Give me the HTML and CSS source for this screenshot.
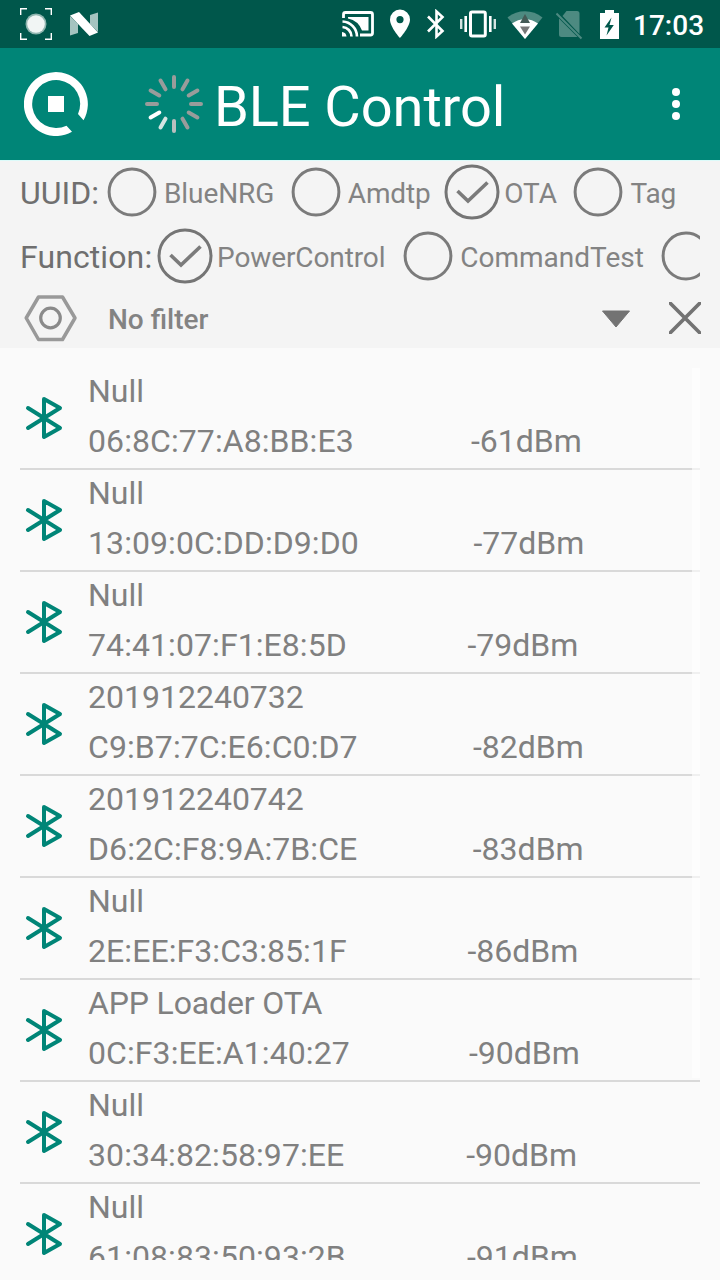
FILE: index.html
```html
<!DOCTYPE html>
<html lang="en">
<head>
<meta charset="utf-8">
<title>BLE Control</title>
<link rel="stylesheet" href="styles.css">
</head>
<body>
<svg class="defs" width="0" height="0">
  <symbol id="radio-off" viewBox="0 0 64 64"><circle cx="32" cy="32" r="22.900" fill="none" stroke="#7b7b7b" stroke-width="3"/></symbol>
  <symbol id="radio-on" viewBox="0 0 64 64"><circle cx="32" cy="32" r="26" fill="none" stroke="#757575" stroke-width="3"/><path d="M17.500 31 28 41 47.500 22.500" fill="none" stroke="#7b7b7b" stroke-width="3.600"/></symbol>
  <symbol id="bt" viewBox="0 0 48 48"><path d="M8 14 40 34 24 43V5L40 14 8 34" fill="none" stroke="#008577" stroke-width="4" stroke-linecap="round" stroke-linejoin="round"/></symbol>
</svg>
<div class="screen">
  <header class="status">
    <svg class="i-rec" width="32" height="32" viewBox="20 8 32 32"><path d="M20.700 15V8.700H27M45 8.700h6.300V15M51.300 33v6.300H45M27 39.300h-6.300V33" fill="none" stroke="#fff" stroke-width="1.400"/><circle cx="36" cy="24" r="10.500" fill="#8fb5af"/><circle cx="36" cy="24" r="8.800" fill="#f1f5f4"/></svg>
    <svg class="i-n" width="28" height="24" viewBox="70 12 28 24"><path d="M70 16l8 8v9l-8 2.500zM98 12.500v19.500l-8-8v-9z" fill="#a5c4c0"/><path d="M70 15.500 79 12 98 32.500 89.500 36z" fill="#fff"/></svg>
    <span class="spacer"></span>
    <svg class="i-cast" width="32" height="28" viewBox="342 10 32 28"><path d="M343.500 18v-3.500a2 2 0 0 1 2-2h25a2 2 0 0 1 2 2V33a2 2 0 0 1-2 2H360" fill="none" stroke="#fff" stroke-width="2.800"/><path d="M348 17h20.500v13.500H362A19 19 0 0 0 348 18.500z" fill="#fff"/><path d="M342.500 21.500A15 15 0 0 1 357 36.500M342.500 27A9.500 9.500 0 0 1 351.500 36.500" fill="none" stroke="#fff" stroke-width="2.700"/><path d="M342 32a5 5 0 0 1 4.500 4.500H342z" fill="#fff"/></svg>
    <svg class="i-pin" width="20" height="30" viewBox="390 9 20 30"><path fill-rule="evenodd" d="M400 9.500a10 10 0 0 0-10 10C390 27 400 38 400 38s10-11 10-18.500a10 10 0 0 0-10-10zm0 6.500a3.600 3.600 0 1 1 0 7.200 3.600 3.600 0 0 1 0-7.200z" fill="#fff"/></svg>
    <svg class="i-bt" width="18" height="30" viewBox="427 9 18 30"><path d="M428 16.500 442.500 31 436.500 36.500V11.500L442.500 17 428 31.500" fill="none" stroke="#fff" stroke-width="2.600"/></svg>
    <svg class="i-vib" width="36" height="28" viewBox="460 10 36 28"><rect x="470.500" y="12" width="14.800" height="24" rx="1.500" fill="none" stroke="#fff" stroke-width="3"/><path d="M461.200 19v10M494.800 19v10" stroke="#d5e3e1" stroke-width="2.400"/><path d="M465.700 16v16M490.300 16v16" stroke="#fff" stroke-width="2.600"/></svg>
    <svg class="i-wifi" width="36" height="29" viewBox="507 9 36 29"><path d="M507.500 16.500a28 28 0 0 1 35 0L525 38z" fill="#4d8a81"/><path d="M512 22.500a22 22 0 0 1 26 0L525 38z" fill="#fff"/><path d="M525 13l5 9h-10z" fill="#455a56"/><path d="M520 25.500h10l-5 8z" fill="#777"/></svg>
    <svg class="i-sim" width="27" height="30" viewBox="556 10 27 30"><path d="M566.500 11H577a2.500 2.500 0 0 1 2.500 2.500V34L562.500 16zM559 18.500 577.500 37H561.500a2.500 2.500 0 0 1-2.500-2.500z" fill="#4d8a81"/><path d="M556.500 13.500 581.500 38.500" stroke="#4d8a81" stroke-width="2"/></svg>
    <svg class="i-bat" width="19" height="29" viewBox="600 9 19 29"><path fill-rule="evenodd" d="M605 9h9v3h5v26h-19V12h5zM611.500 16.500 604.500 26.500h4L606.500 34.500 613.800 24h-4.300z" fill="#fff"/></svg>
    <span class="clock">17:03</span>
  </header>
  <header class="appbar">
    <svg class="logo" width="64" height="64" viewBox="24 72 64 64"><path d="M83.500 120.200A32 32 0 1 0 72 131.700L66.500 125.700A24 24 0 1 1 78 114z" fill="#fff"/><path d="M48 96h16v16H48z" fill="#fff"/></svg>
    <svg class="spinner" width="60" height="60" viewBox="-30 -30 60 60" stroke="#999c9b" stroke-width="4" stroke-linecap="round">
      <path d="M0-17V-27M8.500-14.700 13.500-23.400M14.700-8.500 23.400-13.500M17 0H27M14.700 8.500 23.400 13.500M8.500 14.700 13.500 23.400M-17 0H-27M-14.700-8.500-23.400-13.500M-8.500-14.700-13.500-23.400"/>
      <path d="M0 17V27" stroke="#b9bfbe"/><path d="M-8.500 14.700-13.500 23.400" stroke="#d5e5e2"/><path d="M-14.700 8.500-23.400 13.500" stroke="#fff"/>
    </svg>
    <h1 class="title">BLE Control</h1>
    <svg class="more" width="8" height="32" viewBox="0 0 8 32" fill="#fff"><circle cx="4" cy="4" r="4"/><circle cx="4" cy="16" r="4"/><circle cx="4" cy="28" r="4"/></svg>
  </header>
  <section class="controls">
    <div class="line">
      <span class="name uuid">UUID:</span>
      <span class="opt"><svg class="radio"><use href="#radio-off"/></svg><span class="label">BlueNRG</span></span>
      <span class="opt"><svg class="radio"><use href="#radio-off"/></svg><span class="label">Amdtp</span></span>
      <span class="opt"><svg class="radio"><use href="#radio-on"/></svg><span class="label">OTA</span></span>
      <span class="opt"><svg class="radio"><use href="#radio-off"/></svg><span class="label">Tag</span></span>
    </div>
    <div class="line">
      <span class="name function">Function:</span>
      <span class="opt"><svg class="radio"><use href="#radio-on"/></svg><span class="label power">PowerControl</span></span>
      <span class="opt"><svg class="radio"><use href="#radio-off"/></svg><span class="label command">CommandTest</span></span>
      <span class="opt"><svg class="radio"><use href="#radio-off"/></svg></span>
    </div>
    <div class="filter">
      <svg class="hex" width="56" height="50" viewBox="22 293 56 50" fill="none" stroke="#999"><path d="M38.500 297h24L75 318 62.500 339.500h-24L26.200 318z" stroke-width="3.500" stroke-linejoin="round"/><circle cx="50.500" cy="318" r="9.800" stroke="#8a8a8a" stroke-width="3.200"/></svg>
      <span class="filter-text">No filter</span>
      <svg class="arrow" width="30" height="20" viewBox="0 0 30 20"><path d="M1.500 2H28.500L15 18z" fill="#737373" stroke="#737373" stroke-linejoin="round"/></svg>
      <svg class="close" width="32" height="32" viewBox="0 0 32 32"><path d="M0 0 32 32M32 0 0 32" stroke="#737373" stroke-width="3.700"/></svg>
    </div>
  </section>
  <main class="list">
    <div class="row"><svg class="bt"><use href="#bt"/></svg><div class="info"><div>Null</div><div class="addr"><span class="mac">06:8C:77:A8:BB:E3</span><span class="rssi">-61dBm</span></div></div></div>
    <div class="row"><svg class="bt"><use href="#bt"/></svg><div class="info"><div>Null</div><div class="addr"><span class="mac">13:09:0C:DD:D9:D0</span><span class="rssi">-77dBm</span></div></div></div>
    <div class="row"><svg class="bt"><use href="#bt"/></svg><div class="info"><div>Null</div><div class="addr"><span class="mac">74:41:07:F1:E8:5D</span><span class="rssi">-79dBm</span></div></div></div>
    <div class="row"><svg class="bt"><use href="#bt"/></svg><div class="info"><div>201912240732</div><div class="addr"><span class="mac">C9:B7:7C:E6:C0:D7</span><span class="rssi">-82dBm</span></div></div></div>
    <div class="row"><svg class="bt"><use href="#bt"/></svg><div class="info"><div>201912240742</div><div class="addr"><span class="mac">D6:2C:F8:9A:7B:CE</span><span class="rssi">-83dBm</span></div></div></div>
    <div class="row"><svg class="bt"><use href="#bt"/></svg><div class="info"><div>Null</div><div class="addr"><span class="mac">2E:EE:F3:C3:85:1F</span><span class="rssi">-86dBm</span></div></div></div>
    <div class="row"><svg class="bt"><use href="#bt"/></svg><div class="info"><div class="tight">APP Loader OTA</div><div class="addr"><span class="mac">0C:F3:EE:A1:40:27</span><span class="rssi">-90dBm</span></div></div></div>
    <div class="row"><svg class="bt"><use href="#bt"/></svg><div class="info"><div>Null</div><div class="addr"><span class="mac">30:34:82:58:97:EE</span><span class="rssi">-90dBm</span></div></div></div>
    <div class="row"><svg class="bt"><use href="#bt"/></svg><div class="info"><div>Null</div><div class="addr"><span class="mac">61:08:83:50:93:2B</span><span class="rssi">-91dBm</span></div></div></div>
    <div class="thumb"></div>
  </main>
</div>
</body>
</html>
```
FILE: styles.css
```css
* { box-sizing: border-box; }
body { margin: 0; background: #fafafa; font-family: Roboto, sans-serif; }
svg { display: block; flex: none; }
.defs { position: absolute; }
.screen { width: 720px; height: 1280px; display: flex; flex-direction: column; overflow: hidden; }
.status { height: 48px; flex: none; display: flex; align-items: center; padding: 0 16px 0 20px; background: #00574b; color: #fff; }
.i-n { margin-left: 18px; }
.spacer { flex: 1; }
.i-pin { margin-left: 16px; }
.i-bt { margin-left: 17px; }
.i-vib { margin-left: 15px; }
.i-wifi { margin-left: 11px; }
.i-sim { margin: 2px 0 0 13px; }
.i-bat { margin-left: 17px; }
.clock { width: 71px; margin: 4px 0 0 14px; font-size: 28px; line-height: 34px; font-weight: 500; white-space: nowrap; }
.appbar { height: 112px; flex: none; display: flex; align-items: center; padding: 0 40px 0 24px; background: #008577; color: #fff; }
.spinner { margin-left: 56px; }
.title { flex: 1; margin: 6px 0 0 10px; font-size: 56px; line-height: 66px; font-weight: 400; letter-spacing: -0.1px; white-space: nowrap; }
.controls { height: 188px; flex: none; padding: 0 20px; background: #f4f4f4; box-shadow: inset 0 1px #dcfbfa; color: #838383; }
.line { height: 64px; display: flex; align-items: center; overflow: hidden; }
.name { flex: none; padding-top: 2px; color: #6f6f6f; font-size: 32px; line-height: 38px; }
.uuid { width: 80px; }
.function { width: 133px; letter-spacing: 0.1px; }
.opt { flex: none; display: flex; align-items: center; margin-right: 9.6px; font-size: 28px; line-height: 34px; white-space: nowrap; }
.opt:first-of-type { margin-right: 10px; }
.label { padding-top: 3px; letter-spacing: -0.1px; }
.label.power { padding-right: 1.2px; }
.label.command { letter-spacing: 0; padding-right: 1px; }
.radio { width: 64px; height: 64px; }
.filter { height: 60px; display: flex; align-items: center; margin: 0 -1px 0 2px; }
.filter-text { flex: 1; margin: 4px 0 0 30px; font-size: 28px; line-height: 34px; font-weight: 500; }
.arrow { margin-top: 2px; }
.close { margin-left: 38px; }
.list { position: relative; height: 912px; flex: none; padding: 20px 20px 0; overflow: hidden; color: #808080; font-size: 32px; line-height: 38px; }
.row { height: 102px; display: flex; border-bottom: 2px solid #d9d9d9; }
.bt { width: 48px; height: 48px; margin: 26px 20px 0 0; }
.info { flex: 1; padding-top: 4px; }
.tight { letter-spacing: -0.15px; }
.addr { display: flex; margin-top: 12px; }
.mac { letter-spacing: 0.08px; }
.rssi { flex: 1; padding-right: 1px; text-align: center; }
.thumb { position: absolute; right: 20px; top: 20px; width: 8px; height: 710px; background: rgba(255, 255, 255, .6); }
```
